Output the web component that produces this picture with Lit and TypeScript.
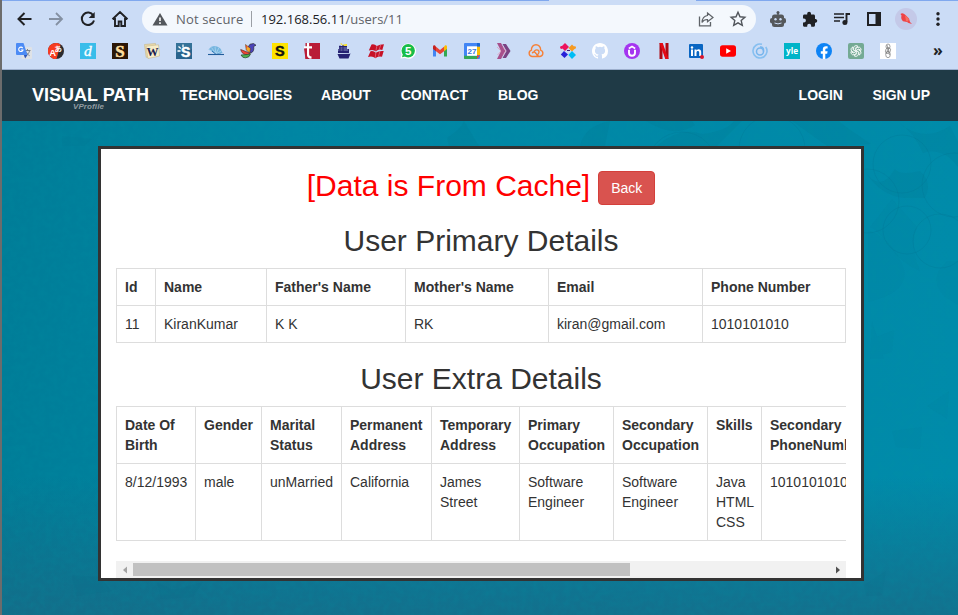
import { LitElement, html, svg, css } from "lit";
import { customElement } from "lit/decorators.js";

const icon = (body: unknown, size = 16) =>
  html`<svg width=${size} height=${size} viewBox="0 0 ${size} ${size}" aria-hidden="true">${body}</svg>`;

const translate = svg`
  <rect x="5.500" y="4" width="10.500" height="12" rx="1" fill="#dfe2e6"/>
  <path d="M8.500 7.500h6M11.500 6v1.500M13.500 8c-.6 2.300-2 3.800-4 4.800M9.800 8.500c.7 1.800 2 3 3.800 4.200" stroke="#7d858e" fill="none"/>
  <path d="M1 0h6.500L11.500 12H1a1 1 0 0 1-1-1V1a1 1 0 0 1 1-1z" fill="#4c8bf5"/>
  <path d="M7.800 12h3.700L9.200 15.500z" fill="#3257b5"/>
  <path d="M6.700 5.100A2.200 2.200 0 1 0 7 7H4.900" stroke="#fff" stroke-width="1.100" fill="none"/>`;
const spellA = svg`
  <circle cx="8" cy="8" r="8" fill="#2b2b2e"/>
  <path d="M12.500 1.500A8 8 0 1 0 8.500 16z" fill="#f73c20"/>
  <text x="1.200" y="12.500" class="g" font-size="9.500" fill="#fff">A</text>
  <text x="6.500" y="9" class="g" font-size="7.500" fill="#fff" transform="rotate(-8 8 8)">あ</text>`;
const dLetter = svg`<rect width="16" height="16" fill="#39bdea"/>
  <text x="4" y="13" class="s" font-size="15.500" font-style="italic" fill="#fff" stroke="#fff" stroke-width=".3">d</text>`;
const sDark = svg`<rect width="16" height="16" fill="#2c1706"/>
  <text x="3.200" y="13.700" class="s b" font-size="17" fill="#ffdf9e" stroke="#ffdf9e" stroke-width=".5">S</text>`;
const wTile = svg`<path d="M.5 1.500l11-1 .7 13-10 .8z" fill="#eadcaf" stroke="#c6b687" stroke-width=".6"/>
  <path d="M2 3.200l12.500-1.400L15.500 13 4 15.600z" fill="#f7edc9" stroke="#c8b88c" stroke-width=".6"/>
  <text x="2.500" y="12.500" class="s b" font-size="13" fill="#19204f" textLength="12" lengthAdjust="spacingAndGlyphs">W</text>`;
const sBlue = svg`<rect width="16" height="16" fill="#28638c"/><path d="M0 0h16v6L0 10z" fill="#347298"/>
  <text x="5" y="14" class="g" font-size="14" fill="#fff" stroke="#fff" stroke-width=".5">S</text>
  <path d="M1.500 8h3M2.500 3.500l2.300 2M7 1.500v2.500" stroke="#fff" stroke-width="1.300"/>`;
const shell = svg`<path d="M.5 6.500Q4 2 8 3.300 13 4 14.500 10L8 11.500z" fill="#75b5df"/>
  <path d="M8 11L1 6.500M8 11L3.500 4.500M8 11L7 3.500M8 11l3-6.500M8 11l6-3.500" stroke="#e3f2ff" stroke-width=".4"/>
  <path d="M4 8l4 3.300h5" stroke="#2b73b4" fill="none"/><path d="M0 11.500h16" stroke="#225d9b" stroke-width="1.100"/>`;
const bird = svg`<path d="M8 4l2-2.800 3.500-.7L16 2.200 13.700 3.500Q14.500 8.500 11 10L8.500 8z" fill="#4a43b8" stroke="#222" stroke-width=".6"/>
  <path d="M5.500 1.500l5 4-.8 4.500-3.500-3z" fill="#f5a828" stroke="#443024" stroke-width=".5"/>
  <path d="M.7 6.500l4 1.500 5.500 2.300c-2.500 2.500-8.500 1.700-9.500-3.800z" fill="#ee4535" stroke="#472320" stroke-width=".6"/>
  <path d="M1 12l6.500-.5 3-.7q-.5 3.700-5 4-3 .5-4.500-2.800z" fill="#51b252" stroke="#24432a" stroke-width=".7"/>
  <path d="M5.500 2l2 1.500L6.500 6z" fill="#e94b33"/>`;
const sYellow = svg`<rect width="16" height="16" fill="#ffe300"/>
  <text x="3.100" y="13" class="g" font-size="14.500" fill="#111" stroke="#111" stroke-width=".4">S</text>`;
const tRed = svg`<path d="M1.500 0H16v16H1.500z" fill="#b91c37"/>
  <path d="M4 0v11.500q0 3 3.500 3.200M0 4.300h8" stroke="#fff" stroke-width="2.200" fill="none"/>
  <path d="M0 5.500h3V16H1.500z" fill="#b91c37"/>`;
const ship = svg`<path d="M3 3h8v3h2v4H2V6h1zM1.500 11l13-.5-2 5h-9z" fill="#252173"/>
  <path d="M2 7h10M3 5h9M2 10.500h12" stroke="#cbdcf6" stroke-width=".6"/>
  <path d="M4 .5h2v1.200l5-.7v1.700l-4 .2z" fill="#ffdf12"/>
  <path d="M7 2v8M4 2.500V10" stroke="#252173"/>`;
const wings = svg`<path d="M3.500 1.500Q6.500.7 8.800 3q3-1.600 7.200-1.800L14.300 7Q10.500 5.700 8 8.500 5.500 6 .8 7.500z" fill="#c71126"/>
  <path d="M2.500 8.300Q5.500 7.500 7.800 9.800 10.800 7.500 15.700 8L14 13.700q-4-1-6.600 1.500Q4.500 12.700 0 14z" fill="#c71126"/>
  <path d="M8.800 3.200L7.800 8.400M7.800 10L7.200 15M12.700 2l-1.500 4.600M11.800 8.500l-1.300 5" stroke="#f0a5b5" stroke-width=".5"/>`;
const bubble = svg`<path d="M.5 15.500l1-4A7.700 7.700 0 1 1 5 15z" fill="#fff"/><circle cx="8.200" cy="7.800" r="6.700" fill="#18bd48"/>
  <path d="M2 14.200l.8-3 2.400 2.200z" fill="#18bd48"/><text x="5" y="12" class="g" font-size="11.500" fill="#fff">5</text>`;
const gmail = svg`<path d="M1 4v9.500h3V6.500z" fill="#4285f4"/><path d="M12 6.500v7h3V4z" fill="#34a853"/>
  <path d="M12 3.500l1-1c1-.6 2 .1 2 1.200V6l-3 2.300z" fill="#fbbc04"/><path d="M4 3.800L8 7l4-3.200v4.400L8 11.200 4 8.200z" fill="#ea4335"/>
  <path d="M1 6V3.700c0-1.100 1-1.800 2-1.200l1 1v4.700z" fill="#c5221f"/>`;
const calendar = svg`<rect width="16" height="16" rx="1" fill="#4285f4"/><path d="M13 3.500h3V12h-3z" fill="#fbbc04"/>
  <path d="M0 12.800h13V16H1a1 1 0 0 1-1-1z" fill="#34a853"/><path d="M13 12.500h3L13 16z" fill="#ea4335"/><path d="M13 0h2a1 1 0 0 1 1 1v2.500h-3z" fill="#1967d2"/>
  <rect x="3" y="3.300" width="10" height="9.500" fill="#fff"/><text x="3.500" y="11" class="g" font-size="8" fill="#3275dd">27</text>`;
const chevrons = svg`<path d="M1 0h4l4.300 8L5 16H1l4-8z" fill="#a8508c"/><path d="M6.500 1h3.500l4.500 7-4.500 7H6.500l4-7z" fill="#7a4383"/>
  <path d="M1 4l4 4-3.500 4M7 4l3 4-3 4" stroke="#e494b8" stroke-width=".7" fill="none"/>`;
const sandbox = svg`<path d="M4 13.500a3.300 3.300 0 0 1-.6-6.400C3.300 4 5.200 1.800 8 1.800s4.800 2.200 4.600 5.300a3.300 3.300 0 0 1-.6 6.400c-2 .4-3-1.300-4-3-1-1.500-2.500-2-3.500-.7M4 13.500h4.500l2.200-3.500C12 7 8.500 6 6.500 8M8.500 13.500H12" stroke="#f68037" stroke-width="1.400" fill="none" stroke-linecap="round"/>`;
const nodes = svg`<path d="M5 0l4 4-4 4-4-4z" fill="#ed125d"/><path d="M12 1.500l3.500 3.500L12 8.500 8.500 5z" fill="#f69a22"/>
  <path d="M4 8l4 3.500L4.500 15 .8 11.500z" fill="#2821d8"/><path d="M12 8l4 4-4 4-3.700-4z" fill="#00bdf5"/>
  <circle cx="1.500" cy="4.500" r="1.400" fill="#ed125d"/><circle cx="14.700" cy="4.500" r="1.300" fill="#f69a22"/><path d="M7 7.500h3" stroke="#44207d"/>`;
const github = svg`<path fill="#fff" d="M8 0C3.580 0 0 3.580 0 8c0 3.540 2.290 6.530 5.470 7.590.4.070.55-.17.55-.38v-1.490c-2.230.48-2.700-.95-2.700-.95-.36-.92-.89-1.170-.89-1.170-.73-.5.06-.49.06-.49.8.06 1.230.83 1.230.83.71 1.230 1.870.87 2.330.66.07-.52.28-.87.51-1.070-1.780-.2-3.640-.89-3.640-3.950 0-.87.31-1.590.82-2.150-.08-.2-.36-1.020.08-2.120 0 0 .67-.21 2.200.82a7.600 7.600 0 0 1 4 0c1.530-1.040 2.200-.82 2.200-.82.44 1.100.16 1.920.08 2.120.51.56.82 1.270.82 2.150 0 3.070-1.870 3.750-3.650 3.950.29.25.54.73.54 1.480v2.200c0 .21.150.46.55.38A8 8 0 0 0 16 8c0-4.420-3.580-8-8-8z"/>`;
const udemy = svg`<circle cx="8" cy="8" r="8" fill="#a435f0"/><path d="M5 6.800v3q0 3 3 3t3-3v-3" stroke="#fff" stroke-width="1.900" fill="none"/><path d="M4.800 5.500L8 3.500l3.200 2" stroke="#fff" stroke-width="1.500" fill="none"/>`;
const netflix = svg`<path d="M3.500 0h3v16h-3zM9.500 0h3v16h-3z" fill="#ad0912"/><path d="M3.500 0h3.200l5.800 16H9.300z" fill="#e50914"/>`;
const linkedin = svg`<rect x="1" y="1" width="14" height="14" rx="1" fill="#0a66c2"/><circle cx="4" cy="4.500" r="1.200" fill="#fff"/>
  <path d="M3 6.500h2V13H3zM6.500 6.500h2v1c1.500-2 4.700-1.400 4.700 1.600V13h-2V9.500c0-2-2.700-2-2.700 0V13h-2z" fill="#fff"/><circle cx="14" cy="14" r="2" fill="#dc172d"/>`;
const youtube = svg`<rect y="2.300" width="16" height="11.400" rx="2.600" fill="#f00"/><path d="M6.200 5.300v5.400L11 8z" fill="#fff"/>`;
const disc = svg`<circle cx="8" cy="8" r="7" stroke="#86bff0" stroke-width="1.600" fill="none" stroke-dasharray="39 5" transform="rotate(-35 8 8)"/>
  <circle cx="8" cy="8.500" r="3.500" stroke="#76b5ed" stroke-width="1.500" fill="none"/><path d="M8 4q4-.5 3.500 4.500" stroke="#76b5ed" stroke-width="1.500" fill="none"/>`;
const yle = svg`<rect width="16" height="16" fill="#00b4c8"/><text x="2" y="10.500" class="o" font-size="9" fill="#fff" textLength="12" lengthAdjust="spacingAndGlyphs">yle</text>`;
const facebook = svg`<circle cx="8" cy="8" r="8" fill="#0d83f5"/><path d="M6.800 16v-5.300h-2V8.200h2v-1.700c0-2.200 1.200-3.300 3.100-3.300l1.700.15v2.050h-1c-1 0-1.300.6-1.300 1.300v1.500h2.300l-.4 2.500H9.300V16z" fill="#fff"/>`;
const gpt = svg`<rect width="16" height="16" rx="2" fill="#74aa94"/>
  <g stroke="#fff" stroke-width=".85" fill="none">${[0, 60, 120, 180, 240, 300].map(
    (a) => svg`<path d="M5.700 6.800V4.600Q6 2.700 8 2.600q1.200 0 2 .8L7.600 4.800V8" transform="rotate(${a} 8 8)"/>`
  )}</g>`;
const sketch = svg`<rect width="16" height="16" fill="#fff"/><g fill="none" stroke="#777" stroke-width=".7">
  <ellipse cx="8" cy="3.500" rx="2" ry="2.500"/><ellipse cx="8" cy="7.500" rx="2.300" ry="3" transform="rotate(25 8 7.500)"/><ellipse cx="8" cy="11.500" rx="2.300" ry="3.200"/><path d="M7 2l2.500 10M9 5L6 11"/></g>`;

const bookmarks = [
  translate, spellA, dLetter, sDark, wTile, sBlue, shell, bird, sYellow, tRed, ship, wings, bubble, gmail,
  calendar, chevrons, sandbox, nodes, github, udemy, netflix, linkedin, youtube, disc, yle, facebook, gpt, sketch,
];

const back = svg`<path d="M16.500 9H3.500M9.500 3L3.500 9l6 6" stroke="#202124" stroke-width="2" fill="none"/>`;
const forward = svg`<path d="M2 9h13M9 3l6 6-6 6" stroke="#8490a2" stroke-width="1.800" fill="none"/>`;
const reload = svg`<path d="M14.300 5.500A6.200 6.200 0 1 0 15 10.500" stroke="#202124" stroke-width="2" fill="none"/><path d="M15.700 2v6H9.700z" fill="#202124"/>`;
const home = svg`<path d="M1.500 9.200L9 2l7.500 7.200M4 8v8h3.700v-4.500h2.600V16H14V8" stroke="#202124" stroke-width="1.900" fill="none"/>`;
const warning = svg`<path d="M8 2l7.500 12.500H.5z" fill="#54585d"/><path d="M8 6.500v3.500M8 11.200v1.700" stroke="#fff" stroke-width="1.600"/>`;
const share = svg`<path d="M2.500 6.500v9.300h11V12" stroke="#5f6368" stroke-width="1.300" fill="none"/><path d="M10.500 3l5.500 4.500-5.500 4.300V9.500C8 9.400 6.200 10.300 5 12.500c.2-4 2-6.500 5.500-7z" stroke="#5f6368" stroke-width="1.200" fill="none"/>`;
const star = svg`<path d="M9 2.300l2 4.500 4.900.5-3.700 3.300 1.100 4.800L9 12.900l-4.300 2.500 1.100-4.800-3.700-3.300L7 6.800z" stroke="#50545a" stroke-width="1.400" fill="none"/>`;
const robot = svg`<path d="M8 4V1" stroke="#50545a" stroke-width="1.500"/><circle cx="8" cy="1.500" r="1.500" fill="#50545a"/><rect x="2" y="3.500" width="12" height="12.500" rx="2.500" fill="#55585b"/><rect y="7" width="16" height="5.500" rx="2" fill="#55585b"/>
  <circle cx="5.500" cy="8.300" r="1.200" fill="#cbdcf6"/><circle cx="10.500" cy="8.300" r="1.200" fill="#cbdcf6"/><path d="M4.500 12q3.500 1.800 7 0" stroke="#cbdcf6" fill="none"/>`;
const puzzle = svg`<path d="M13.800 8H13V5c0-.9-.6-1.500-1.500-1.500H9V2.600a1.900 1.900 0 0 0-3.800 0v.9H2.500C1.600 3.500 1 4.100 1 5v2.600h.9a2 2 0 0 1 0 4H1v2.600c0 .9.600 1.500 1.500 1.500h2.700v-.9a2 2 0 0 1 4 0v.9h2.300c.9 0 1.500-.6 1.500-1.500v-2.500h.8a1.900 1.900 0 0 0 0-3.700z" fill="#202124"/>`;
const queue = svg`<path d="M1 4h10M1 7.500h10M1 11h6" stroke="#202124" stroke-width="1.600"/><path d="M13.500 12V4H17" stroke="#202124" stroke-width="1.900" fill="none"/><circle cx="11.900" cy="12.600" r="2.500" fill="#202124"/>`;
const panel = svg`<path fill-rule="evenodd" d="M1 1h14v14H1zM3 3v10h6.500V3z" fill="#202124"/>`;
const avatar = svg`<circle cx="11" cy="11" r="11" fill="#c4c9e8"/><path d="M5.500 6q2-2 5 1l3.500 3.500 1 3.500 2 2-3.500-1-1.500-1-4-.7Q5.500 11 6.500 7.500z" fill="#ef4244"/><path d="M10 7l4 4-1 2.500-2-.5z" fill="#f66f61"/>`;
const dots = svg`<g fill="#202124"><circle cx="8" cy="2.700" r="1.700"/><circle cx="8" cy="8" r="1.700"/><circle cx="8" cy="13.300" r="1.700"/></g>`;

@customElement("browser-bar")
class BrowserBar extends LitElement {
  static styles = css`
    :host { display: block; height: 69px; background: #cbdcf6; border-bottom: 1px solid #9dafcd; box-sizing: content-box; font-family: "Open Sans", sans-serif; }
    svg { display: block; flex: none; }
    .strip { display: flex; justify-content: space-between; height: 1px; }
    .strip i { height: 1px; background: #80a8ee; }
    .strip .l { width: 547px; } .strip .r { width: 262px; }
    .row { display: flex; align-items: center; height: 28px; padding: 4px 4px 0 13px; }
    .nav { display: flex; flex: none; gap: 14px; width: 127px; }
    .url { display: flex; flex: none; align-items: center; box-sizing: border-box; width: 614px; height: 28px; padding: 0 9px 0 10px; border-radius: 14px; background: #f4f8fd; font-size: 13px; color: #202124; white-space: nowrap; }
    .ns { color: #5f6368; margin-left: 8px; width: 67px; letter-spacing: .15px; }
    .sep { width: 1px; height: 16px; background: #9b9fa5; margin: 0 9px 0 8px; }
    .path { color: #5f6368; flex: 1; }
    .url .st { margin-left: 14px; }
    .tools { display: grid; grid-template-columns: repeat(6, 32px); align-items: center; justify-items: center; margin-left: 6px; }
    .marks { display: flex; align-items: center; gap: 16px; height: 16px; padding: 10px 0 0 14px; }
    .more { color: #202124; font-size: 16px; line-height: 16px; font-weight: 700; margin-left: 21px; position: relative; top: -1px; }
    .g { font-family: "Liberation Sans", "Noto Sans CJK JP", sans-serif; font-weight: 700; }
    .s { font-family: "Liberation Serif", serif; }
    .b { font-weight: 700; }
    .o { font-family: "Open Sans", sans-serif; font-weight: 700; }
  `;
  render() {
    return html`
      <div class="strip"><i class="l"></i><i class="r"></i></div>
      <div class="row">
        <div class="nav">${icon(back, 18)}${icon(forward, 18)}${icon(reload, 18)}${icon(home, 18)}</div>
        <div class="url">
          ${icon(warning)}<span class="ns">Not secure</span><span class="sep"></span><span>192.168.56.11</span><span class="path">/users/11</span>
          ${icon(share, 18)}<span class="st">${icon(star, 18)}</span>
        </div>
        <div class="tools">${icon(robot)}${icon(puzzle)}${icon(queue, 18)}${icon(panel)}${icon(avatar, 22)}${icon(dots)}</div>
      </div>
      <div class="marks">${bookmarks.map((b) => icon(b))}<span class="more">»</span></div>
    `;
  }
}

const primary = {
  widths: [39, 111, 139, 143, 154, 143],
  head: ["Id", "Name", "Father's Name", "Mother's Name", "Email", "Phone Number"],
  row: ["11", "KiranKumar", "K K", "RK", "kiran@gmail.com", "1010101010"],
};
const extra = {
  widths: [79, 66, 80, 90, 88, 94, 94, 54, 110],
  head: ["Date Of Birth", "Gender", "Marital Status", "Permanent Address", "Temporary Address", "Primary Occupation", "Secondary Occupation", "Skills", "Secondary PhoneNumber"],
  row: ["8/12/1993", "male", "unMarried", "California", "James Street", "Software Engineer", "Software Engineer", "Java HTML CSS", "1010101010"],
};

@customElement("app-root")
class AppRoot extends LitElement {
  static styles = css`
    :host { display: block; box-sizing: border-box; height: 615px; border-left: 2px solid #6c6c6c; overflow: hidden; font: 14px/20px "Liberation Sans", Arial, sans-serif; color: #333; }
    .bar { display: flex; align-items: center; box-sizing: border-box; height: 51px; padding: 0 28px 2px 30px; background: #1f3a46; color: #fff; font-weight: 700; }
    .brand { position: relative; width: 148px; font-size: 18px; }
    .sub { position: absolute; left: 41px; top: 17px; font: italic 700 8px/10px "Liberation Sans", sans-serif; letter-spacing: .1px; color: #929ca1; }
    .links { display: flex; gap: 29.500px; flex: 1; }
    .links span:nth-child(2) { margin-left: -.5px; }
    .links span:nth-child(3), .links span:nth-child(4) { margin-left: .4px; }
    .links.end { flex: none; gap: 30px; }
    .stage { position: relative; display: flex; justify-content: flex-start; align-items: flex-start; height: 494px; padding: 25px 0 0 96px; box-sizing: border-box;
      background: linear-gradient(180deg, rgba(25,104,132,0) 0, rgba(25,104,132,0) 72%, rgba(25,104,132,.75) 100%), linear-gradient(90deg, #007d98 0, #0085a3 30%, #008baa 100%); }
    .texture { position: absolute; inset: 0; width: 956px; height: 494px; }
    .panel { position: relative; box-sizing: border-box; width: 766px; height: 435px; border: 3px solid #333; background: #fff; padding: 22px 15px 0; overflow: hidden; }
    h2 { margin: 0; font-weight: 400; font-size: 30px; line-height: 33px; text-align: center; }
    .status { display: flex; justify-content: center; gap: 8px; height: 34px; }
    .status h2 { color: #f00; margin-top: -2px; }
    .btn { box-sizing: border-box; width: 57px; height: 34px; border: 1px solid #d43f3a; border-radius: 4px; background: #d9534f; color: #fff; font: 14px/20px "Liberation Sans", sans-serif; padding: 0; }
    .title { margin: 19px 0 11px; }
    .clip { overflow: hidden; }
    table { table-layout: fixed; border-collapse: separate; border-spacing: 0; border-top: 1px solid #ddd; border-left: 1px solid #ddd; }
    .full { width: 730px; }
    .wide { width: 756px; }
    th, td { box-sizing: border-box; text-align: left; vertical-align: top; padding: 8px 0 8px 8px; border-right: 1px solid #ddd; border-bottom: 1px solid #ddd; }
    .scroll { display: flex; align-items: center; margin-top: 20px; height: 17px; background: #f1f1f1; }
    .arrow { width: 17px; display: flex; justify-content: center; }
    .track { flex: 1; height: 13px; }
    .thumb { width: 497px; height: 13px; background: #c1c1c1; }
  `;

  private table(t: typeof primary, cls: string) {
    return html`<table class=${cls}>
      <colgroup>${t.widths.map((w) => html`<col style="width:${w}px">`)}</colgroup>
      <thead><tr>${t.head.map((h) => html`<th>${h}</th>`)}</tr></thead>
      <tbody><tr>${t.row.map((c) => html`<td>${c}</td>`)}</tr></tbody>
    </table>`;
  }

  render() {
    return html`
      <browser-bar></browser-bar>
      <nav class="bar">
        <div class="brand">VISUAL PATH<span class="sub">VProfile</span></div>
        <div class="links"><span>TECHNOLOGIES</span><span>ABOUT</span><span>CONTACT</span><span>BLOG</span></div>
        <div class="links end"><span>LOGIN</span><span>SIGN UP</span></div>
      </nav>
      <main class="stage">
        <svg class="texture" viewBox="0 0 956 494" aria-hidden="true">
          <defs><filter id="grain" x="0" y="0" width="100%" height="100%"><feTurbulence type="fractalNoise" baseFrequency=".16" numOctaves="3" seed="4"/><feColorMatrix values="0 0 0 0 0  0 0 0 0 .28  0 0 0 0 .36  0 0 0 .35 -.12"/></filter></defs>
          <rect width="956" height="494" filter="url(#grain)"/>
          <g fill="#004f66" fill-opacity=".07">
            <path d="M644 0q28 18 49 4l-3 -4zM740 0l-25 25h-60q22-20 45-12 25-3 32-13zM790 0l35 25 44-2q-30-20-32-23zM895 0q25 23 53 5l8 16v25q-15-20-35-14-9-21-26-32zM863 50q15 25 40 27l20 0q8-15-5-27-20 5-25-2-15 25-30 2z"/>
            <path d="M445 17q15-10 17-17l15 25h-30zM578 25q4-20 30-25l-5 25z"/>
          </g>
          <g fill="#004f66" fill-opacity=".035">
            <path d="M890 78l25 28q-8 20 3 44-12-5-24-16-15-23-26-28zM60 15l30 3-8 7H60zM870 200l12 38h-14zM874 216l18-7-2 22-14 4zM925 285l22-15-2 28zM890 310l30-4-2 22-24-2zM862 464l22-14-4 24-16 1zM70 454l28 2 12 14-36 5zM155 461l16 8 30-8-10 15-32 2z"/>
            <path d="M866 109q25 9 36 39 5 24-36 33zM945 140q-20 18-2 36l13 8v-44z"/>
          </g>
          <g stroke="#006e8a" stroke-opacity=".2" fill="none"><circle cx="900" cy="43" r="29"/><circle cx="952" cy="64" r="32"/><circle cx="680" cy="46" r="35"/><circle cx="770" cy="28" r="33"/><circle cx="865" cy="80" r="32"/><circle cx="905" cy="109" r="24"/><circle cx="938" cy="120" r="27"/></g>
        </svg>
        <section class="panel">
          <div class="status"><h2>[Data is From Cache]</h2><button class="btn">Back</button></div>
          <h2 class="title">User Primary Details</h2>
          ${this.table(primary, "full")}
          <h2 class="title">User Extra Details</h2>
          <div class="clip">${this.table(extra, "wide")}</div>
          <div class="scroll">
            <span class="arrow"><svg width="8" height="8"><path d="M6 .5v7L2 4z" fill="#a3a3a3"/></svg></span>
            <div class="track"><div class="thumb"></div></div>
            <span class="arrow"><svg width="8" height="8"><path d="M2 .5v7L6 4z" fill="#505050"/></svg></span>
          </div>
        </section>
      </main>
    `;
  }
}
